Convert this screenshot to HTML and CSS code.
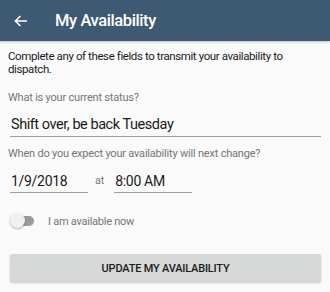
FILE: index.html
```html
<!DOCTYPE html>
<html>
<head>
<meta charset="utf-8">
<link rel="stylesheet" href="styles.css">
</head>
<body>
<header class="appbar">
  <svg class="back" width="14" height="12" viewBox="0 0 14 12"><path d="M13 6H1.6M6.4 1L1.4 6l5 5" fill="none" stroke="#fff" stroke-width="1.6"/></svg>
  <h1 class="title">My Availability</h1>
</header>
<main class="content">
  <p class="intro">Complete any of these fields to transmit your availability to dispatch.</p>
  <label class="label label-status">What is your current status?</label>
  <div class="field field-status">Shift over, be back Tuesday</div>
  <label class="label label-change">When do you expect your availability will next change?</label>
  <div class="row">
    <div class="field field-date">1/9/2018</div>
    <span class="at">at</span>
    <div class="field field-time">8:00 AM</div>
  </div>
  <div class="switch-row">
    <span class="switch"><span class="track"></span><span class="thumb"></span></span>
    <span class="switch-label">I am available now</span>
  </div>
  <button class="btn">UPDATE MY AVAILABILITY</button>
</main>
</body>
</html>
```
FILE: styles.css
```css
* { box-sizing: border-box; }
html, body { margin: 0; padding: 0; }
body {
  width: 330px;
  height: 292px;
  overflow: hidden;
  background: #fafafa;
  font-family: Roboto, "Noto Sans", sans-serif;
  color: #212121;
}
.appbar {
  height: 41px;
  background: #3d5a72;
  display: flex;
  align-items: center;
  padding-left: 14px;
  box-shadow: 0 1px 2px rgba(0,0,0,0.25);
}
.back { display: block; margin-top: 1px; }
.title {
  margin: 0 0 0 27px;
  font-size: 16.5px;
  letter-spacing: -0.4px;
  font-weight: 500;
  color: #fff;
}
.content {
  padding: 9px 9px 0 8px;
  display: flex;
  flex-direction: column;
}
.intro {
  margin: 0;
  font-size: 11.5px;
  letter-spacing: -0.4px;
  line-height: 13px;
  color: #1a1a1a;
}
.label {
  font-size: 11px;
  letter-spacing: -0.2px;
  line-height: 13px;
  color: #757575;
}
.label-status { margin-top: 15px; }
.field {
  margin-left: 2px;
  border-bottom: 1px solid #9e9e9e;
  color: #1a1a1a;
  padding-left: 1px;
}
.field-status {
  margin-top: 11px;
  font-size: 14.5px;
  letter-spacing: -0.45px;
  line-height: 20px;
  padding-bottom: 1px;
}
.label-change { margin-top: 10px; }
.row {
  display: flex;
  align-items: flex-end;
  margin-top: 12px;
}
.field-date, .field-time {
  width: 78px;
  font-size: 14px;
  letter-spacing: -0.3px;
  line-height: 18px;
  padding-bottom: 2px;
}
.at {
  font-size: 10.5px;
  color: #757575;
  margin: 0 10px 0 7px;
  padding-bottom: 6px;
}
.field-time { margin-left: 0; }
.switch-row {
  display: flex;
  align-items: center;
  margin-top: 20px;
  margin-left: 2px;
}
.switch {
  position: relative;
  width: 25px;
  height: 16px;
  display: block;
}
.track {
  position: absolute;
  left: 8px;
  top: 3px;
  width: 16px;
  height: 10px;
  border-radius: 5px;
  background: #9a9a9a;
}
.thumb {
  position: absolute;
  left: 0;
  top: 0;
  width: 15px;
  height: 15px;
  border-radius: 50%;
  background: #f1f1f1;
  box-shadow: 0 1px 2px rgba(0,0,0,0.3);
}
.switch-label {
  margin-left: 13px;
  font-size: 11px;
  letter-spacing: -0.25px;
  color: #757575;
}
.btn {
  margin: 25px 0 0 2px;
  width: 311px;
  height: 28px;
  border: none;
  border-radius: 2px;
  background: #d7d8d8;
  box-shadow: 0 1px 2px rgba(0,0,0,0.2);
  font-family: Roboto, "Noto Sans", sans-serif;
  font-size: 11px;
  letter-spacing: -0.2px;
  font-weight: 500;
  color: #1a1a1a;
  padding: 0;
}
```
